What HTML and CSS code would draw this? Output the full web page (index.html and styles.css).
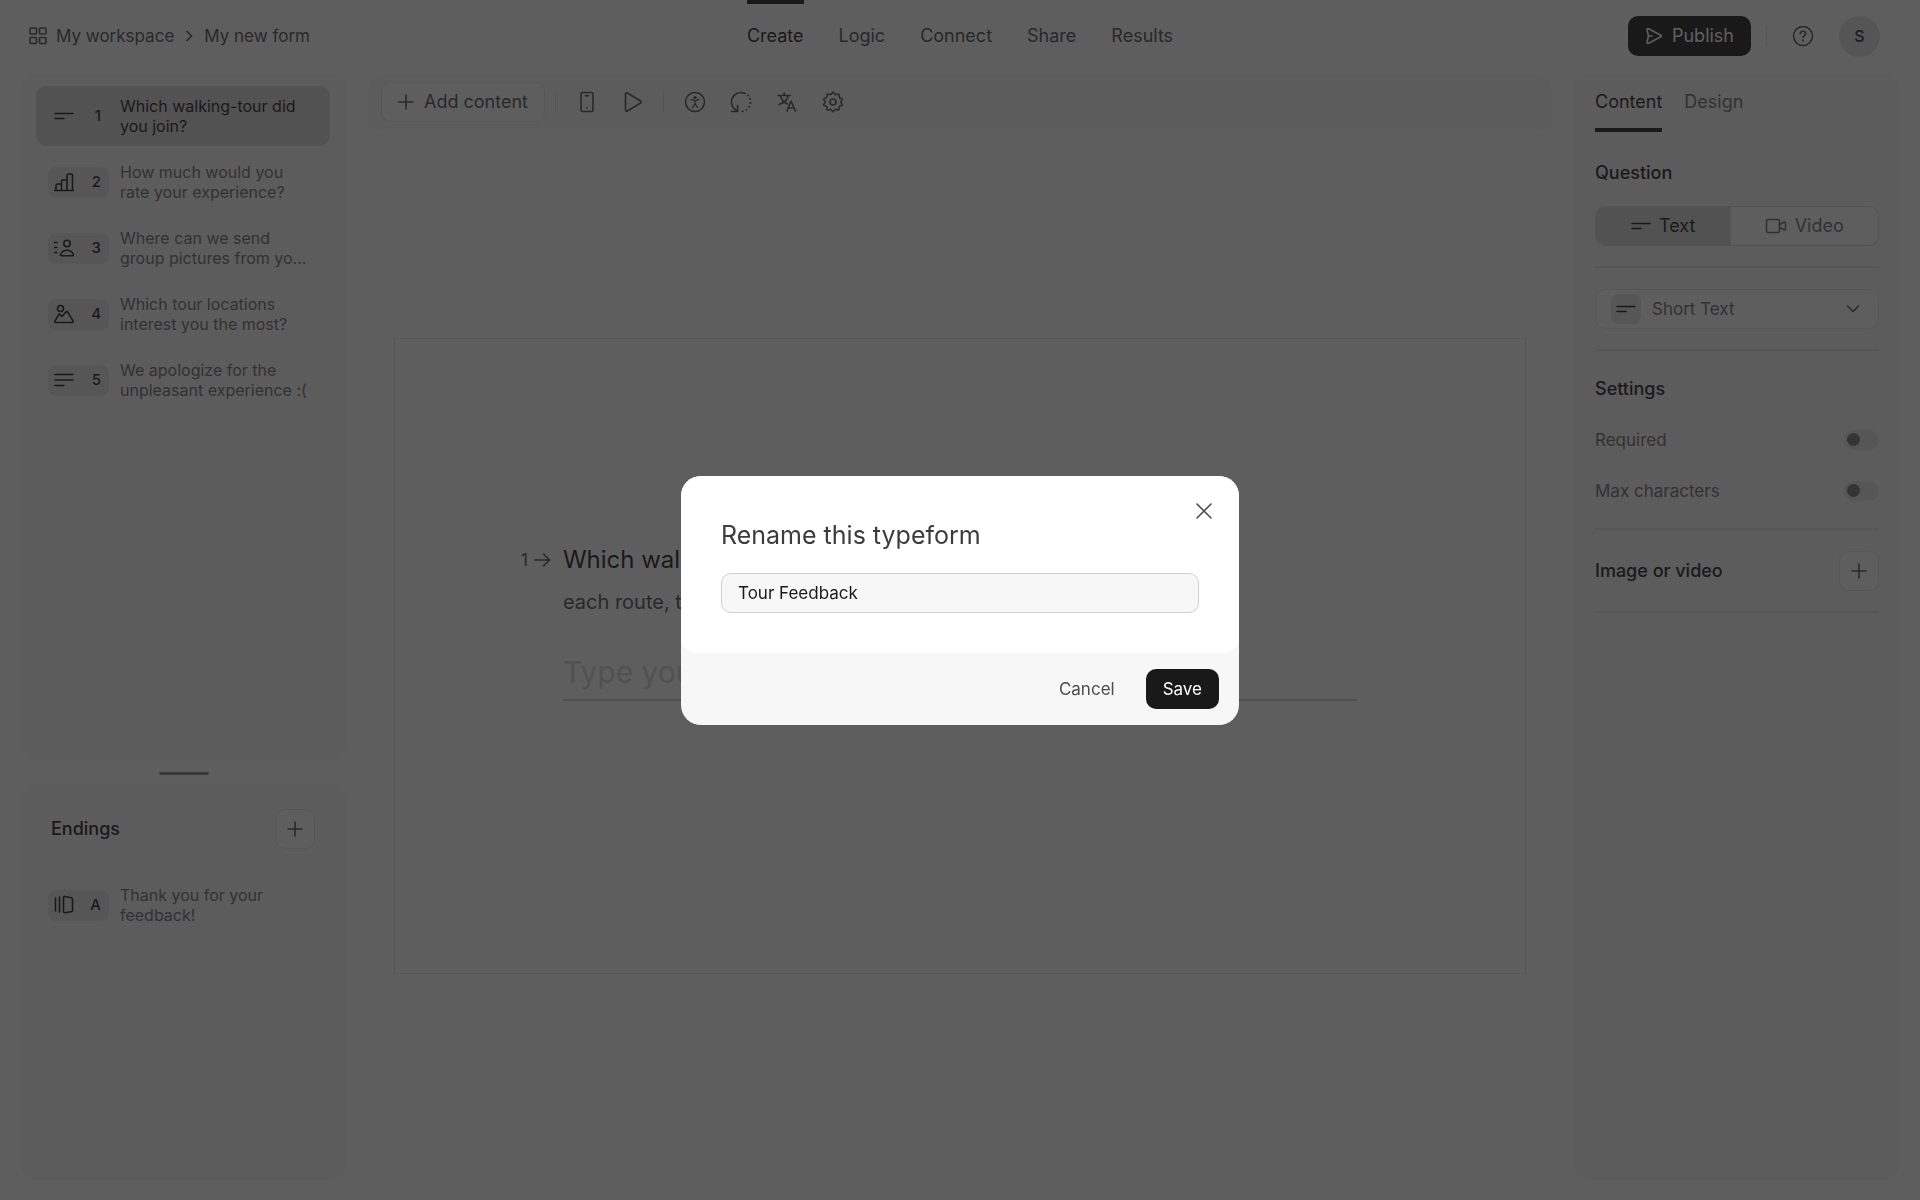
FILE: index.html
```html
<!DOCTYPE html>
<html lang="en">
<head>
<meta charset="utf-8">
<meta name="viewport" content="width=device-width, initial-scale=1">
<title>My new form</title>
<link rel="stylesheet" href="styles.css">
</head>
<body>
<svg class="sprite" aria-hidden="true">
  <symbol id="i-short" viewBox="0 0 20 20"><path d="M1 7.5h18M1 12.5h9"/></symbol>
  <symbol id="i-long" viewBox="0 0 20 20"><path d="M1 4.500h18M1 10h18M1 15.500h9"/></symbol>
  <symbol id="i-plus" viewBox="0 0 16 16"><path d="M8 1v14M1 8h14"/></symbol>
</svg>

<div class="app">
  <header class="header">
    <div class="crumbs">
      <a class="crumb" href="#">
        <svg class="icon" width="18" height="18" viewBox="0 0 18 18"><rect x="1" y="1" width="6.500" height="6" rx="1"/><rect x="10.500" y="1" width="6.500" height="6" rx="1"/><rect x="1" y="10.500" width="6.500" height="6" rx="1"/><rect x="10.500" y="10.500" width="6.500" height="6" rx="1"/></svg>
        My workspace
      </a>
      <svg class="icon" width="8" height="12" viewBox="0 0 8 12"><path d="M2 1.500 6.500 6 2 10.500"/></svg>
      <a class="crumb" href="#">My new form</a>
    </div>
    <nav class="nav">
      <a class="nav-link nav-link-active" href="#">Create</a>
      <a class="nav-link" href="#">Logic</a>
      <a class="nav-link" href="#">Connect</a>
      <a class="nav-link" href="#">Share</a>
      <a class="nav-link" href="#">Results</a>
    </nav>
    <div class="account">
      <button class="publish" type="button">
        <svg class="icon" width="18" height="18" viewBox="0 0 18 18"><path d="M2 2.700c0-1 .8-1.400 1.600-1L15.800 8.200c.8.400.8 1.200 0 1.600L3.600 16.300c-.8.400-1.600 0-1.600-1l1.200-5V7.700zM3.200 9H7"/></svg>
        Publish
      </button>
      <span class="rule"></span>
      <button class="icon-button" type="button" aria-label="Help">
        <svg class="icon" width="22" height="22" viewBox="0 0 22 22"><circle cx="11" cy="11" r="9.500"/><path d="M8.300 8.700c0-1.600 1.200-2.500 2.700-2.500s2.700.9 2.700 2.400c0 1.900-2.700 2-2.700 4"/><path d="M11 15v1"/></svg>
      </button>
      <button class="avatar" type="button">S</button>
    </div>
  </header>

  <main class="workspace">
    <aside class="sidebar">
      <section class="panel questions">
        <a class="item item-active" href="#">
          <span class="badge"><svg class="icon" width="20" height="20"><use href="#i-short"/></svg><span>1</span></span>
          <span class="item-text">Which walking-tour did you join?</span>
        </a>
        <a class="item" href="#">
          <span class="badge"><svg class="icon" width="20" height="20" viewBox="0 0 20 20"><path d="M0 18.500h20M2 18v-4.500c0-1 .5-1.500 1.500-1.500H7.500M7.500 18V9.500c0-1 .5-1.500 1.500-1.500h4M13 18V3.500c0-1 .5-1.500 1.500-1.500H17c1 0 1.500.5 1.500 1.500V18"/></svg><span>2</span></span>
          <span class="item-text">How much would you rate your experience?</span>
        </a>
        <a class="item" href="#">
          <span class="badge"><svg class="icon" width="20" height="20" viewBox="0 0 20 20"><circle cx="13" cy="5.500" r="3.200"/><path d="M7.500 17.800c-1 0-1.200-.8-.8-1.600 1-2.400 3.300-4 6.300-4s5.300 1.600 6.300 4c.4.800.2 1.600-.8 1.600z"/><path d="M0 4.500h3M0 9.500h3M0 14.500h3"/></svg><span>3</span></span>
          <span class="item-text">Where can we send group pictures from yo...</span>
        </a>
        <a class="item" href="#">
          <span class="badge"><svg class="icon" width="20" height="20" viewBox="0 0 20 20"><circle cx="6.500" cy="4.500" r="3"/><path d="M2 18.500c-1 0-1.500-.7-1-1.600L4.700 10.600c.4-.6 1-.6 1.400 0l1.700 1.900 4.400-4.600c.5-.5 1.100-.4 1.500.2L19 16.900c.5.900 0 1.600-1 1.600z"/></svg><span>4</span></span>
          <span class="item-text">Which tour locations interest you the most?</span>
        </a>
        <a class="item" href="#">
          <span class="badge"><svg class="icon" width="20" height="20"><use href="#i-long"/></svg><span>5</span></span>
          <span class="item-text">We apologize for the unpleasant experience :(</span>
        </a>
      </section>
      <div class="handle"></div>
      <section class="panel endings">
        <div class="endings-head">
          <h2 class="heading">Endings</h2>
          <button class="add" type="button" aria-label="Add ending"><svg class="icon" width="16" height="16"><use href="#i-plus"/></svg></button>
        </div>
        <a class="item" href="#">
          <span class="badge"><svg class="icon" width="20" height="20" viewBox="0 0 20 20"><path d="M1.500 3v13M5.500 2v15M9.500 2.500c0-.9.500-1.300 1.300-1l6.200 1.300c.9.200 1.500.7 1.500 1.600v11c0 .9-.6 1.300-1.500 1.400l-6.200.9c-.8.100-1.300-.3-1.300-1.100z"/></svg><span>A</span></span>
          <span class="item-text">Thank you for your feedback!</span>
        </a>
      </section>
    </aside>

    <section class="stage">
      <div class="toolbar">
        <button class="add-content" type="button"><svg class="icon" width="16" height="16"><use href="#i-plus"/></svg>Add content</button>
        <span class="rule"></span>
        <div class="tools">
          <button class="icon-button" type="button" aria-label="Mobile view"><svg class="icon" width="22" height="22" viewBox="0 0 22 22"><rect x="5" y="1.500" width="12" height="19" rx="1.500"/><path d="M9.500 4.800h3M11 16.500v.6"/></svg></button>
          <button class="icon-button" type="button" aria-label="Preview"><svg class="icon" width="22" height="22" viewBox="0 0 22 22"><path d="M3.500 3.200c0-1.300.8-1.800 1.900-1.200L18.600 10c.9.500.9 1.500 0 2L5.400 20c-1.100.600-1.900.1-1.900-1.200z"/></svg></button>
        </div>
        <span class="rule"></span>
        <div class="tools">
          <button class="icon-button" type="button" aria-label="Accessibility"><svg class="icon" width="22" height="22" viewBox="0 0 22 22"><circle cx="11" cy="11" r="9.500"/><circle class="fill" cx="11" cy="6.500" r=".8"/><path class="thin" d="M7 8.500l4 1.200 4-1.200M11 9.700v3L8.500 16.500M11 12.700l2.500 3.800"/></svg></button>
          <button class="icon-button" type="button" aria-label="Recall"><svg class="icon" width="22" height="22" viewBox="0 0 22 22"><path d="M15 2.400A9.500 9.500 0 0 0 1.500 11c0 3.500 1.800 6.500 4.800 8.300M1.500 20.500h6.200v-6"/><path class="dots" d="M18 4.600h.1M20 8h.1M20.500 12h.1M19.200 15.700h.1M16.500 18.800h.1M12.500 20.300h.1"/></svg></button>
          <button class="icon-button" type="button" aria-label="Translate"><svg class="icon" width="22" height="22" viewBox="0 0 22 22"><path d="M2 4.500h12.500M8.200 2v2.500M4.500 5c1 4 4 7 7 8M12.200 5C11.200 9 7 12.300 3 13.500M11 20l4-10 4.500 10M12.500 17h5.700"/></svg></button>
          <button class="icon-button" type="button" aria-label="Settings"><svg class="icon" width="22" height="22" viewBox="0 0 22 22"><circle cx="11" cy="11" r="3"/><path d="M11 1.300c1 0 1.300 1.900 2.400 2.300s2.500-1.100 3.300-.5 0 2.400.7 3.300 2.700.7 2.900 1.700S18.900 9.800 18.900 11s1.700 1.900 1.400 2.900-2.200.8-2.900 1.700.1 2.700-.7 3.300-2.200-.9-3.300-.5S12 20.700 11 20.700s-1.300-1.900-2.400-2.300-2.500 1.100-3.300.5 0-2.400-.7-3.300-2.600-.7-2.900-1.700S3.100 12.200 3.100 11 1.400 9.100 1.700 8.100s2.200-.8 2.900-1.700-.1-2.700.7-3.300 2.200.9 3.300.5S10 1.300 11 1.300z"/></svg></button>
        </div>
      </div>
      <div class="canvas">
        <div class="card">
          <div class="question">
            <div class="number">1<svg class="icon" width="17" height="16" viewBox="0 0 17 16"><path d="M1 8h14M9.500 2l6 6-6 6"/></svg></div>
            <div class="question-body">
              <label class="question-title" for="answer">Which walking-tour did you join?</label>
              <p class="question-note">each route, the highlights too</p>
              <input class="answer" id="answer" type="text" placeholder="Type your answer here...">
            </div>
          </div>
        </div>
      </div>
    </section>

    <aside class="panel settings">
      <div class="tabs">
        <a class="tab tab-active" href="#">Content</a>
        <a class="tab" href="#">Design</a>
      </div>
      <h2 class="heading settings-title">Question</h2>
      <div class="segmented">
        <button class="segment segment-active" type="button"><svg class="icon" width="20" height="20"><use href="#i-short"/></svg>Text</button>
        <button class="segment segment-wide" type="button"><svg class="icon" width="22" height="20" viewBox="0 0 22 20"><rect x="1.500" y="3.500" width="13" height="13" rx="1.500"/><path d="M14.500 8.700 19 6.200c.8-.4 1.500 0 1.500.8v6c0 .8-.7 1.200-1.500.8l-4.500-2.500"/></svg>Video</button>
      </div>
      <hr class="line">
      <div class="type">
        <span class="type-icon"><svg class="icon" width="20" height="20"><use href="#i-short"/></svg></span>
        <select class="type-select" aria-label="Question type"><option>Short Text</option></select>
        <svg class="icon type-chevron" width="14" height="10" viewBox="0 0 14 10"><path d="M1.500 2 7 7.500 12.500 2"/></svg>
      </div>
      <hr class="line">
      <h2 class="heading settings-title">Settings</h2>
      <label class="option">Required<input class="toggle" type="checkbox"></label>
      <label class="option">Max characters<input class="toggle" type="checkbox"></label>
      <hr class="line">
      <div class="media">
        <h2 class="heading">Image or video</h2>
        <button class="add" type="button" aria-label="Add image or video"><svg class="icon" width="16" height="16"><use href="#i-plus"/></svg></button>
      </div>
      <hr class="line">
    </aside>
  </main>
</div>

<div class="overlay">
  <form class="modal" role="dialog" aria-labelledby="rename-title">
    <div class="modal-body">
      <button class="close" type="button" aria-label="Close"><svg class="icon" width="18" height="18" viewBox="0 0 18 18"><path d="M2 2l14 14M16 2L2 16"/></svg></button>
      <label class="modal-title" id="rename-title" for="form-name">Rename this typeform</label>
      <input class="modal-input" id="form-name" type="text" value="Tour Feedback">
    </div>
    <div class="modal-foot">
      <button class="cancel" type="button">Cancel</button>
      <button class="save" type="button">Save</button>
    </div>
  </form>
</div>
</body>
</html>
```
FILE: styles.css
```css
:root {
  --ink: #191919;
  --text: #4c4c4c;
  --muted: #6b6b6b;
  --panel: #f7f7f7;
  --border: #e4e4e4;
  --badge: #e5e5e5;
}

* { box-sizing: border-box; }

body {
  margin: 0;
  background: #fff;
  color: var(--text);
  font: 400 18px/24px Inter, "Liberation Sans", sans-serif;
}

button, input, select { font: inherit; color: inherit; }
button { padding: 0; border: 0; background: none; }
a { color: inherit; text-decoration: none; }

.sprite { position: absolute; width: 0; height: 0; }

.icon {
  flex: none;
  fill: none;
  stroke: currentColor;
  stroke-width: 1.6;
  stroke-linecap: round;
  stroke-linejoin: round;
}
.icon .fill { fill: currentColor; }
.icon .dots { stroke-width: 2; }
.icon .thin { stroke-width: 1.3; }

.app {
  display: flex;
  flex-direction: column;
  min-height: 100vh;
}

/* Header */
.header {
  display: grid;
  grid-template-columns: 1fr auto 1fr;
  align-items: center;
  height: 72px;
}
.crumbs {
  display: flex;
  align-items: center;
  gap: 11px;
  padding-left: 29px;
  font-size: 17px;
}
.crumb { display: flex; align-items: center; gap: 9px; }
.nav { display: flex; gap: 35px; height: 100%; }
.nav-link {
  display: flex;
  align-items: center;
  border-top: 4px solid transparent;
  border-bottom: 4px solid transparent;
}
.nav-link-active { color: var(--ink); border-top-color: var(--ink); }
.account {
  display: flex;
  align-items: center;
  justify-content: flex-end;
  padding-right: 40px;
}
.account .icon-button { margin: 0 25px; }
.account .rule { margin-left: 15px; }
.publish {
  display: flex;
  align-items: center;
  gap: 9px;
  height: 40px;
  padding: 0 17px;
  border-radius: 10px;
  background: var(--ink);
  color: #fff;
}
.rule { flex: none; width: 1px; height: 20px; background: #dcdcdc; }
.icon-button { display: flex; color: var(--text); }
.avatar {
  width: 41px;
  height: 41px;
  border-radius: 50%;
  background: #e0e0e0;
  color: var(--ink);
  font-size: 16px;
  font-weight: 500;
}

/* Workspace */
.workspace {
  flex: 1;
  display: grid;
  grid-template-columns: 327px 1fr 327px;
  column-gap: 21px;
  padding: 2px 20px 20px;
}
.panel { background: var(--panel); border-radius: 16px; }

.sidebar { display: flex; flex-direction: column; }
.questions {
  flex: 1;
  display: flex;
  flex-direction: column;
  gap: 6px;
  padding: 12px 17px 12px 16px;
}
.item {
  display: flex;
  align-items: center;
  gap: 11px;
  height: 60px;
  padding: 0 16px 0 12px;
  border-radius: 10px;
  color: var(--muted);
  font-size: 16px;
  line-height: 20px;
}
.item-active { background: #d6d6d6; color: var(--ink); }
.badge {
  flex: none;
  display: flex;
  align-items: center;
  justify-content: space-between;
  width: 61px;
  height: 31px;
  padding: 0 8px 0 6px;
  border-radius: 8px;
  background: var(--badge);
  color: var(--ink);
  font-size: 15px;
  font-weight: 500;
}
.item-active .badge { background: transparent; }
.handle {
  width: 50px;
  height: 3px;
  margin: 12px auto 9px;
  border-radius: 2px;
  background: #8a8a8a;
}
.endings { flex: 0 0 396px; padding: 25px 17px 12px 16px; }
.endings-head {
  display: flex;
  align-items: center;
  justify-content: space-between;
  margin-bottom: 26px;
  padding: 0 15px;
}
.heading { margin: 0; color: var(--ink); font-size: 18px; font-weight: 500; }
.add {
  display: flex;
  align-items: center;
  justify-content: center;
  width: 40px;
  height: 40px;
  border: 1px solid var(--border);
  border-radius: 10px;
  background: #fff;
}

/* Stage */
.stage { display: flex; flex-direction: column; }
.toolbar {
  display: flex;
  align-items: center;
  height: 56px;
  padding: 0 13px;
  border-radius: 16px;
  background: var(--panel);
}
.add-content {
  display: flex;
  align-items: center;
  gap: 10px;
  height: 40px;
  margin-right: 10px;
  padding: 0 16px;
  border: 1px solid var(--border);
  border-radius: 10px;
  background: #fff;
}
.tools { display: flex; gap: 24px; margin: 0 19px 0 20px; }
.canvas {
  flex: 1;
  display: flex;
  align-items: center;
  padding: 2px 26px 0;
}
.card {
  flex: 1;
  aspect-ratio: 16 / 9;
  padding: 205px 168px 0 126px;
  border: 1px solid #e0e0e0;
}
.question { display: flex; gap: 12px; }
.number {
  display: flex;
  align-items: center;
  gap: 6px;
  height: 32px;
  font-size: 17px;
}
.question-body { flex: 1; }
.question-title {
  display: block;
  color: var(--ink);
  font-size: 24px;
  line-height: 32px;
}
.question-note { margin: 12px 0 0; font-size: 20px; line-height: 28px; }
.answer {
  display: block;
  width: 100%;
  height: 56px;
  margin-top: 29px;
  padding: 0;
  border: 0;
  border-bottom: 2px solid #cdcdcd;
  background: transparent;
  font-size: 30px;
}
.answer::placeholder { color: #d2d2d2; opacity: 1; }

/* Settings panel */
.settings { padding: 0 21px 0 22px; }
.tabs { display: flex; gap: 22px; }
.tab {
  height: 58px;
  padding-top: 16px;
  border-bottom: 4px solid transparent;
  color: var(--muted);
}
.tab-active { color: var(--ink); border-bottom-color: var(--ink); }
.settings-title { padding: 29px 0 21px; }
.segmented {
  display: flex;
  height: 40px;
  border: 1px solid #d8d8d8;
  border-radius: 10px;
  overflow: hidden;
}
.segment {
  flex: 135;
  display: flex;
  align-items: center;
  justify-content: center;
  gap: 8px;
  background: #fff;
  color: var(--muted);
}
.segment-wide { flex: 148; }
.segment-active { background: #d6d6d6; color: var(--ink); }
.line { height: 2px; margin: 20px 0 21px; border: 0; background: var(--border); }
.type {
  position: relative;
  display: flex;
  align-items: center;
  height: 40px;
  border: 1px solid var(--border);
  border-radius: 10px;
  background: #fff;
}
.type-icon {
  position: absolute;
  left: 15px;
  display: flex;
  align-items: center;
  justify-content: center;
  width: 30px;
  height: 30px;
  border-radius: 8px;
  background: var(--badge);
  color: var(--ink);
  pointer-events: none;
}
.type-select {
  flex: 1;
  height: 100%;
  padding: 0 40px 0 56px;
  border: 0;
  appearance: none;
  background: none;
  color: var(--muted);
  font-size: 17px;
}
.type-chevron { position: absolute; right: 18px; pointer-events: none; }
.line + .settings-title { padding: 5px 0 13px; }
.option {
  display: flex;
  align-items: center;
  justify-content: space-between;
  height: 51px;
  color: var(--muted);
  font-size: 17px;
}
.toggle {
  display: flex;
  align-items: center;
  width: 35px;
  height: 20px;
  margin: 0;
  padding: 0 3px;
  border-radius: 10px;
  appearance: none;
  background: var(--badge);
}
.toggle::before {
  content: "";
  width: 13px;
  height: 13px;
  border-radius: 50%;
  background: #737373;
}
.option + .line { margin-top: 12px; }
.media { display: flex; align-items: center; justify-content: space-between; }

/* Rename dialog */
.overlay {
  position: fixed;
  inset: 0;
  display: flex;
  align-items: center;
  justify-content: center;
  background: rgba(25, 25, 25, 0.7);
}
.modal {
  width: 558px;
  border-radius: 20px;
  background: #f7f7f7;
  font-size: 17px;
  overflow: hidden;
}
.modal-body {
  position: relative;
  padding: 43px 40px 40px;
  border-radius: 0 0 16px 16px;
  background: #fff;
}
.modal-title {
  display: block;
  margin-bottom: 22px;
  color: #3c3c3c;
  font-size: 25px;
  line-height: 32px;
}
.modal-input {
  display: block;
  width: 100%;
  height: 40px;
  padding: 0 16px;
  border: 1px solid #cfcfcf;
  border-radius: 10px;
  background: #f7f7f7;
  color: var(--ink);
}
.close {
  position: absolute;
  top: 26px;
  right: 26px;
  display: flex;
  color: var(--text);
}
.modal-foot {
  display: flex;
  align-items: center;
  justify-content: flex-end;
  gap: 14px;
  padding: 16px 20px;
}
.cancel, .save { height: 40px; padding: 0 17px; border-radius: 10px; }
.save { background: var(--ink); color: #fff; }
```
